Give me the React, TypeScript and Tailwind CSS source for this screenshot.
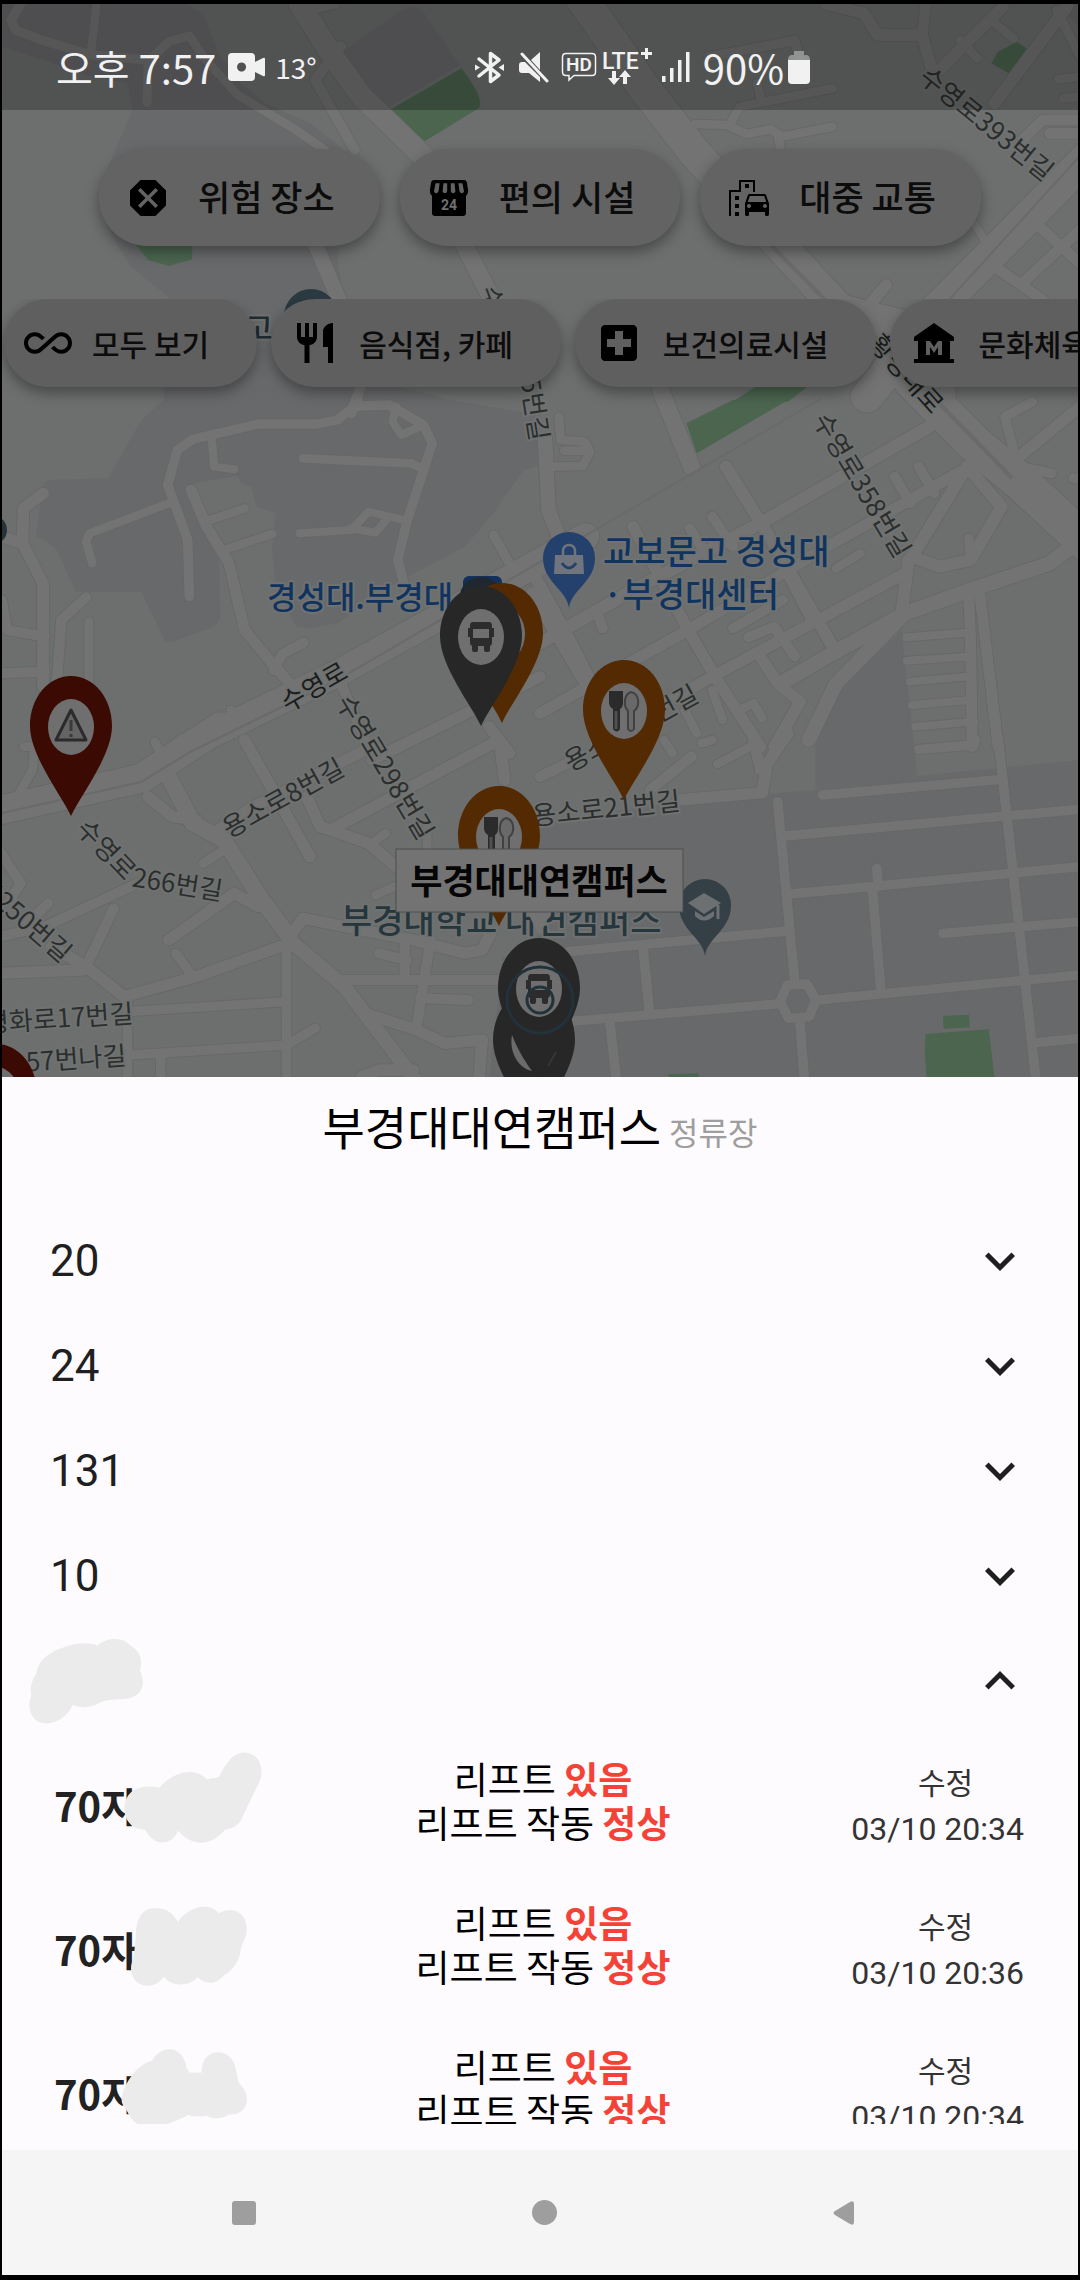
import React from "react";
import {
  MdAllInclusive,
  MdDangerous,
  MdExpandLess,
  MdExpandMore,
  MdLocalHospital,
  MdMuseum,
  MdOutlineEmojiTransportation,
  MdRestaurant,
} from "react-icons/md";

type Road = [number, string];
type Tile = { place: string; campus: string; green: string; roads: Road[] };

const LAND = "#6c6f6e";
const CAMPUS = "#68696b";
const ROAD = "#737373";
const CASING = "#656867";
const GREEN = "#4b654f";

/* Each tile uses its own grid; `place` puts it on the map canvas. */
const tiles: Tile[] = [
  {
    place: "translate(0 0) scale(.3444 .3333)",
    campus:
      "M5,12 H545 L590,45 L640,170 L700,250 L770,310 L900,370 L1010,460 L980,780 L1000,900 L1160,1160 L1310,1200 L475,1200 L500,900 L380,800 L310,680 L315,500 L385,330 L370,250 L270,230 L5,140Z M980,165 L1180,22 Q1200,12 1225,30 L1335,195 L1115,330 L1030,250Z",
    green:
      "M395,735 L430,780 L490,798 L558,778 V735Z M1115,340 L1340,205 Q1410,300 1390,325 L1215,435Z",
    roads: [
      [28, "M60,12 L32,60 L45,90 L120,120 L265,165 L430,180"],
      [24, "M280,12 L265,150"],
      [26, "M427,308 L430,185 L490,125 L550,108 L590,170 L690,285 L860,390 L970,470"],
      [64, "M870,12 L960,160 L1050,290 L1200,440 L1280,520"],
      [30, "M990,138 L915,240 L1030,450"],
      [30, "M900,28 L970,12"],
      [44, "M910,720 L985,900"],
      [52, "M1340,720 L1430,900"],
      [30, "M1020,1240 L1050,1150"],
    ],
  },
  {
    place: "translate(540 0) scale(.3444 .3333)",
    campus: "M1500,12 H1568 V80 Q1530,50 1500,12Z",
    green: "M1310,190 L1330,155 L1385,125 L1420,150 L1365,222Z M560,1205 L640,1150 L790,1150 L720,1205Z",
    roads: [
      [95, "M125,0 L300,260 L450,460 L700,740 L870,930 L1060,980 L1160,1180"],
      [34, "M830,12 L940,40 L980,105 L1110,105 L1135,200"],
      [30, "M1120,12 L1110,105"],
      [28, "M490,170 L740,122 L755,180"],
      [26, "M640,290 L630,250 M850,265 L580,320 L550,375 L450,372"],
      [26, "M550,378 L600,402 L670,388 L700,410 L850,380 M690,400 L700,460"],
      [34, "M1345,20 L1160,210"],
      [26, "M1220,120 L1270,175 M1310,60 L1375,115"],
      [36, "M1530,20 L1320,310"],
      [26, "M1568,170 L1500,30 M1568,230 L1505,238 M1568,290 L1520,295"],
      [32, "M1568,360 L1460,360 L1380,440 M1568,400 L1480,400"],
      [95, "M1620,440 L1150,930 L950,1190"],
      [24, "M1240,640 L1310,750"],
      [32, "M1440,670 L1568,790 M1320,800 L1460,900 M1568,690 L1400,850"],
      [34, "M1005,855 L960,910"],
    ],
  },
  {
    place: "translate(0 400) scale(.3444 .3333)",
    campus:
      "M475,0 L410,60 L315,235 L140,240 Q118,255 120,290 L105,410 Q150,430 165,450 L220,575 H410 L480,725 L500,725 L620,680 Q640,665 640,640 L635,480 L560,250 L690,228 L700,250 L730,262 L745,320 L800,340 L790,450 L800,560 L860,680 L900,685 L980,670 L1130,560 L1350,440 L1440,330 L1520,210 L1568,195 V45 L1310,0Z",
    green: "",
    roads: [
      [28, "M1130,15 L1030,18 L980,60 L920,72 H750 L560,118 L515,150 L487,255 L545,420 L550,590"],
      [24, "M615,115 L622,200 L680,208"],
      [25, "M490,310 L260,400 L250,425 L268,490"],
      [32, "M555,270 L600,380 L665,490 L710,690 L790,790 L850,860"],
      [26, "M610,360 L710,325 M650,450 L790,402"],
      [28, "M1130,15 L1230,75 L1255,130 L1180,370 L1155,480 L1175,560 M1040,20 V0"],
      [24, "M1150,20 L1140,65 L1165,105 L1230,75"],
      [26, "M880,175 L1195,190 L1225,205"],
      [24, "M870,400 L1020,390 L1070,335 L1170,360 M1020,385 L1090,398 L1130,350"],
      [28, "M1433,405 L1490,510"],
      [30, "M882,728 L820,762 L795,810"],
      [34, "M125,280 L68,325 L65,430 L125,550 V860 M5,410 L65,430"],
      [30, "M5,600 L20,690 L130,710 M250,592 L178,660 L165,850 M5,820 L130,815"],
      [26, "M258,665 V860"],
      [26, "M670,930 L700,980"],
      [80, "M1700,410 L980,820 L540,1040"],
      [34, "M1568,830 L1080,1080 M1420,980 L1480,1060"],
      [30, "M990,850 L1060,1020"],
      [36, "M1545,580 L1700,850"],
    ],
  },
  {
    place: "translate(540 400) scale(.3444 .3333)",
    campus: "M1050,690 L870,870 L800,1025 H1085Z",
    green: "M425,70 L560,0 H720 L455,160Z",
    roads: [
      [50, "M350,-30 L440,200"],
      [42, "M15,120 L25,330 L65,440"],
      [26, "M55,50 L60,120 L130,125 L145,155 L125,198 L30,200 M70,152 H135"],
      [36, "M540,200 L660,400 L850,740"],
      [38, "M1130,80 L640,370 L270,570 L0,730"],
      [34, "M1230,210 L850,430 L430,690 L0,940"],
      [34, "M1060,520 L790,670 L500,830 L330,930"],
      [34, "M270,380 L430,690 L520,850 L640,1040"],
      [36, "M-20,520 L70,690 L150,850"],
      [34, "M700,480 L790,660 M640,770 L690,850 L755,905 L680,1040"],
      [30, "M1030,230 L1075,310 M1100,200 L1145,280 M500,350 L560,440 M435,385 L475,450"],
      [30, "M170,650 L182,685 M560,685 L705,600 M605,712 L680,680 L740,770"],
      [26, "M860,505 L930,460 M580,930 L620,910 L645,955 M500,870 L530,960 M420,930 L455,1000"],
      [110, "M1080,-60 L1260,130 L1400,250 L1620,460"],
      [44, "M1568,420 L1480,490 L1250,570 L1060,640 L850,760 L700,850"],
      [42, "M1060,640 L860,850 L780,1020"],
      [36, "M1070,480 L1050,640 M1240,200 L1080,470 L1160,500 L1250,480 L1340,320 L1240,200"],
      [28, "M1250,480 L1245,415 M1430,5 L1350,50 L1380,170"],
      [34, "M1568,20 L1380,180"],
      [30, "M1390,200 L1485,220 M1568,235 H1550"],
      [32, "M1245,590 L1250,720 L1255,1040 M1278,590 L1330,1040"],
      [24, "M1065,712 L1240,698 M1065,782 L1240,770 M1075,845 L1240,830 M1080,915 L1250,900 M1090,980 L1260,965"],
    ],
  },
  {
    place: "translate(0 740) scale(.3444 .3333)",
    campus: "M1460,650 H1600 V1020 H1420Z",
    green: "",
    roads: [
      [86, "M640,-40 L410,115 L-20,215"],
      [26, "M70,20 H100 L95,90 L50,170 M450,5 L480,70"],
      [48, "M490,110 L560,250 L650,300 L760,480 L840,590"],
      [34, "M430,170 L500,230 L570,240"],
      [34, "M620,280 L720,210 L1060,30 M710,0 L900,350"],
      [28, "M590,370 L650,330"],
      [34, "M890,170 L930,260 L960,270 L1230,120 L1450,0 M960,270 L1070,310 L1150,380 M1450,0 L1465,120"],
      [26, "M1120,280 L1080,310 M1090,465 L1180,425 M1240,260 V320"],
      [34, "M840,590 L880,535 L1050,570 L1200,600 L1350,640 L1400,630 L1425,580"],
      [30, "M0,335 L60,430 L30,480 M140,490 L80,550 M0,590 L130,560 L400,430 M330,505 L250,680"],
      [34, "M490,600 L680,460 L750,500 M-10,700 L240,690 M150,620 L250,680 L360,770 L570,710 L840,610"],
      [28, "M510,640 L560,710"],
      [28, "M832,600 V1020 M370,815 L832,785 M370,770 V1020 M385,945 L832,915 L915,865 M467,950 V1020"],
      [42, "M840,600 L1000,740 L1220,1040"],
      [30, "M970,720 H1480 M1100,640 L1180,660 M1175,600 V720 M1250,600 L1210,860 M1220,775 L1360,780"],
      [34, "M1060,820 L1210,870 L1290,910 L1400,900 L1390,1030 M1050,1010 L1100,990 H1200"],
    ],
  },
  {
    place: "translate(540 740) scale(.3444 .3333)",
    campus: "M0,250 L400,185 L800,150 V0 H1085 L1095,108 L1568,60 V1020 H-20Z",
    green:
      "M1170,828 L1245,824 L1248,862 L1172,866Z M1120,882 L1303,868 L1320,1015 H1123 L1117,930Z M370,1003 L460,1000 V1015 H380Z",
    roads: [
      [32, "M0,110 L110,55 M320,150 L440,50 M640,90 L620,0"],
      [34, "M400,180 L645,158 L660,70 L720,-20"],
      [26, "M515,72 L620,15 M385,40 L360,0 M470,10 L500,0"],
      [28, "M690,185 L740,730 M820,165 L1340,118 M1100,28 L1260,15 L1265,0 M710,288 L1568,208"],
      [28, "M1330,-10 L1440,1020 M725,462 L960,440 L1568,380 M978,385 L982,440 M965,445 L990,755"],
      [28, "M1170,580 L1568,545 M80,635 L720,573 M300,630 L318,820 M80,845 L690,792 M810,780 L1568,705"],
      [28, "M755,850 L768,1020 M203,850 L222,1020 M1440,908 L1568,895"],
      [28, "M718,735 L775,732 L801,780 L782,830 L722,835 L697,785Z"],
    ],
  },
];

type Label = {
  t: string;
  x: number;
  y: number;
  r: number;
  s?: number;
  c?: string;
  w?: number;
  a?: "start" | "middle" | "end";
};
const labels: Label[] = [
  { t: "수영로393번길", x: 988, y: 122, r: 39 },
  { t: "수", x: 494, y: 297, r: 70 },
  { t: "5번길", x: 537, y: 409, r: 81 },
  { t: "황령대로", x: 908, y: 372, r: 48, c: "#1b1d1c" },
  { t: "수영로358번길", x: 864, y: 484, r: 59 },
  { t: "수영로", x: 313, y: 685, r: -30, c: "#1b1d1c" },
  { t: "수영로298번길", x: 387, y: 766, r: 59 },
  { t: "용소로8번길", x: 282, y: 796, r: -29 },
  { t: "수영로", x: 108, y: 848, r: 46 },
  { t: "266번길", x: 178, y: 882, r: 9 },
  { t: "용소로13번길", x: 630, y: 726, r: -29 },
  { t: "용소로21번길", x: 606, y: 806, r: -6 },
  { t: "수영로250번길", x: 69, y: 955, r: 41, a: "end" },
  { t: "평화로17번길", x: 133, y: 1011, r: -4, a: "end" },
  { t: "57번나길", x: 126, y: 1053, r: -4, a: "end" },
  { t: "고", x: 259, y: 326, r: 0, s: 30, c: "#1f2c31", w: 500 },
  { t: "경성대.부경대", x: 267, y: 595, r: 0, s: 32, c: "#11345f", a: "start", w: 500 },
  { t: "교보문고 경성대", x: 603, y: 549, r: 0, s: 34, c: "#11345f", a: "start", w: 500 },
  { t: "·부경대센터", x: 603, y: 592, r: 0, s: 34, c: "#11345f", a: "start", w: 500 },
  { t: "부경대학교 대연캠퍼스", x: 341, y: 918, r: 0, s: 34, c: "#26363d", a: "start", w: 500 },
];

type PinProps = { x: number; y: number; color: string; solid?: boolean; children?: React.ReactNode };

function Pin({ x, y, color, solid, children }: PinProps) {
  return (
    <g transform={`translate(${x} ${y})`}>
      <path
        d="M0,0 C-9,-20 -41,-60 -41,-90 C-41,-118 -23,-140 0,-140 C23,-140 41,-118 41,-90 C41,-60 9,-20 0,0Z"
        fill={color}
      />
      {!solid && <ellipse cx="0" cy="-89" rx="23" ry="28" fill="#6f6f6f" />}
      <g transform="translate(0 -89)">{children}</g>
    </g>
  );
}

const BusGlyph = () => (
  <g fill="#2c2c2c">
    <path
      fillRule="evenodd"
      d="M-8,-15 H8 Q11,-15 11,-11 V6 Q11,8 9,9 V13 Q9,15 7,15 H5 Q3,15 3,13 V9 H-3 V13 Q-3,15 -5,15 H-7 Q-9,15 -9,13 V9 Q-11,8 -11,6 V-11 Q-11,-15 -8,-15Z M-8,-8 V1 H8 V-8Z"
    />
    <path d="M-13,-9 h3 v9 h-3z M10,-9 h3 v9 h-3z" />
  </g>
);

const Cutlery = () => (
  <g>
    <path d="M-15,-20 H-1 V-8 Q-1,-4 -4,-2 V18 Q-7,23 -11,18 V-2 Q-15,-4 -15,-9Z" fill="#2b2b2b" />
    <path d="M-8,0 V18" stroke="#505050" strokeWidth="3" />
    <path d="M7,-19 C16,-17 16,-4 10,0 V18 Q7,22 4,18 V0 C-1,-5 0,-17 7,-19Z" fill="#696969" stroke="#414141" strokeWidth="2" />
  </g>
);

function MapCanvas() {
  return (
    <svg
      viewBox="2 4 1076 1073"
      preserveAspectRatio="xMidYMin slice"
      className="block h-full w-full font-['Noto_Sans_CJK_KR',sans-serif]"
      role="img"
      aria-label="지도"
    >
      <rect x="0" y="0" width="1080" height="1080" fill={LAND} />
      {tiles.map((t) => (
        <g key={t.place} transform={t.place}>
          <path d={t.campus} fill={CAMPUS} />
          {t.green && <path d={t.green} fill={GREEN} />}
        </g>
      ))}
      {[CASING, ROAD].map((color, pass) => (
        <g key={color} fill="none" stroke={color} strokeLinejoin="round" strokeLinecap="round">
          {tiles.map((t) => (
            <g key={t.place} transform={t.place}>
              {t.roads.map(([w, d]) => (
                <path key={d} d={d} strokeWidth={pass ? w : w + 5} />
              ))}
            </g>
          ))}
        </g>
      ))}
      <g fill="none" stroke="#696a6a" strokeWidth="2">
        <path d="M1078,158 L938,312 M822,398 L337,680 L190,752 L141,782 L2,813" />
        <path d="M770,244 L825,300" strokeWidth="4" />
        <path d="M938,402 L1012,478" strokeWidth="4" />
      </g>

      <circle cx="311" cy="316" r="27" fill="#2b3940" />
      <circle cx="-8" cy="530" r="15" fill="#26343a" />

      <g stroke="#6f7271" strokeWidth="4" strokeLinejoin="round" paintOrder="stroke">
        {labels.map((l) => (
          <text
            key={l.t + l.x}
            x={l.x}
            y={l.y}
            transform={`rotate(${l.r} ${l.x} ${l.y})`}
            fontSize={l.s ?? 26}
            fontWeight={l.w ?? 400}
            fill={l.c ?? "#2c2e2d"}
            textAnchor={l.a ?? "middle"}
            dominantBaseline="central"
          >
            {l.t}
          </text>
        ))}
      </g>

      <g>
        <path d="M569,608 C567,590 543,582 543,558 A26,26 0 0 1 595,558 C595,582 571,590 569,608Z" fill="#24406c" />
        <path d="M555,555 H583 L584,574 H554Z" fill="#70757d" />
        <path d="M563,555 V550 Q564,545 569,545 Q574,545 575,550 V555" fill="none" stroke="#70757d" strokeWidth="2.5" />
        <path d="M562,563 Q569,573 576,563" fill="none" stroke="#24406c" strokeWidth="3" />
      </g>
      <g>
        <path d="M705,956 C703,938 679,930 679,905 A26,26 0 0 1 731,905 C731,930 707,938 705,956Z" fill="#344046" />
        <path d="M688,903 L704,893 L721,903 L704,914Z M695,911 L704,917 L714,911 V916 Q704,925 695,916Z" fill="#6c7073" />
        <path d="M718,905 V919" stroke="#6c7073" strokeWidth="3" />
      </g>

      <rect x="463" y="576" width="39" height="30" rx="6" fill="#12315c" />
      <ellipse cx="481" cy="596" rx="21" ry="19" fill="#1f2730" />
      <Pin x={502} y={723} color="#532a02" />
      <Pin x={481} y={726} color="#272727">
        <BusGlyph />
      </Pin>
      <Pin x={71} y={816} color="#3b0a02">
        <path d="M0,-17 L15,13 H-15Z" fill="#646464" stroke="#2b2b2b" strokeWidth="3" strokeLinejoin="round" />
        <path d="M0,-7 V4 M0,7 V10" stroke="#3a3a3a" strokeWidth="3" />
      </Pin>
      <Pin x={624} y={800} color="#532a02">
        <Cutlery />
      </Pin>
      <Pin x={499} y={926} color="#532a02">
        <Cutlery />
      </Pin>
      <Pin x={-4} y={1184} color="#3b0a02" />
      <Pin x={534} y={1130} color="#272727" solid />
      <Pin x={539} y={1078} color="#272727">
        <BusGlyph />
      </Pin>
      <path d="M512,1035 C509,1050 517,1068 532,1071 C524,1060 518,1050 512,1035Z" fill="#6b6b6b" />
      <path d="M556,1052 L548,1066" stroke="#363636" strokeWidth="2" />
      <g fill="none" stroke="#22323a" strokeWidth="3">
        <circle cx="540" cy="1000" r="33" />
        <circle cx="540" cy="1000" r="13" />
      </g>

      <path d="M527,911 H552 L539,936Z" fill="#737373" />
      <rect x="396" y="849" width="287" height="63" fill="#737373" stroke="#4c4e4d" strokeWidth="1" />
      <text x="539" y="878" fontSize="35" fontWeight="700" fill="#050505" textAnchor="middle" dominantBaseline="central">
        부경대대연캠퍼스
      </text>
    </svg>
  );
}

const StoreIcon = () => (
  <svg viewBox="0 0 24 24" className="size-12 shrink-0 text-black" fill="currentColor" aria-hidden="true">
    <path
      fillRule="evenodd"
      d="M4.5,3 H19.5 Q20.6,3 20.9,4 L21.6,8.3 Q21.6,10 20.5,10.9 V19.4 Q20.5,21 18.900,21 H5.1 Q3.5,21 3.5,19.4 V10.9 Q2.4,10 2.4,8.3 L3.1,4 Q3.4,3 4.5,3Z M5.3,4.6 L4.5,8.6 Q4.8,9.8 5.8,9.6 Q6.6,9.4 6.8,8.4 L7.3,4.6Z M9.2,4.6 L8.8,8.8 Q9.2,9.7 10,9.6 Q11,9.4 11.1,8.5 V4.6Z M12.9,4.6 V8.5 Q13,9.4 14,9.6 Q14.8,9.7 15.2,8.8 L14.8,4.6Z M16.7,4.6 L17.2,8.4 Q17.4,9.4 18.2,9.6 Q19.2,9.8 19.5,8.6 L18.7,4.6Z"
    />
    <text x="12" y="18.2" fontSize="7" fontWeight="700" textAnchor="middle" fill="#707070" className="font-['Roboto',sans-serif]">
      24
    </text>
  </svg>
);

const mainFilters = [
  { label: "위험 장소", icon: <MdDangerous className="size-12 shrink-0 text-black" /> },
  { label: "편의 시설", icon: <StoreIcon /> },
  { label: "대중 교통", icon: <MdOutlineEmojiTransportation className="size-12 shrink-0 text-black" /> },
];

const subFilters = [
  { label: "모두 보기", icon: <MdAllInclusive className="size-12 shrink-0 text-black" /> },
  { label: "음식점, 카페", icon: <MdRestaurant className="size-12 shrink-0 text-black" /> },
  { label: "보건의료시설", icon: <MdLocalHospital className="size-12 shrink-0 text-black" /> },
  { label: "문화체육시설", icon: <MdMuseum className="size-12 shrink-0 text-black" /> },
];

function StatusBar() {
  return (
    <div className="flex h-[106px] items-center bg-black/25 pt-5 pr-[268px] pl-[54px] text-[#f1f1f1]">
      <span className="text-[40px] leading-10">오후 7:57</span>
      <svg viewBox="0 0 37 28" className="ml-3 h-7 w-[37px]" fill="currentColor" aria-hidden="true">
        <path
          fillRule="evenodd"
          d="M4,0 H23 Q27,0 27,4 V9 L35,5 Q37,4 37,6 V22 Q37,24 35,23 L27,19 V24 Q27,28 23,28 H4 Q0,28 0,24 V4 Q0,0 4,0Z M13.5,9.5 a4.5,4.5 0 1 0 .1,0Z"
        />
      </svg>
      <span className="ml-2.5 text-[28px] leading-10">13°</span>
      <div className="ml-auto flex items-center">
        <svg viewBox="0 0 30 33" className="h-[33px] w-[30px]" fill="currentColor" aria-hidden="true">
          <path d="M4,8 L24,24 L15.500,30.500 V2.500 L24,9 L4,25" fill="none" stroke="currentColor" strokeWidth="3.500" strokeLinejoin="round" strokeLinecap="round" />
          <path d="M0,13.500 L5,16.500 L0,19.500Z M29,13 V20 L23.500,16.500Z" />
        </svg>
        <svg viewBox="0 0 30 31" className="ml-3.5 h-[31px] w-[30px]" fill="currentColor" aria-hidden="true">
          <path d="M0,13 Q0,10 3,10 H6 L21,25 V30 L10,21 H3 Q0,21 0,18Z M12,8 L21,0 V18Z" />
          <path d="M3,2 L28,29" stroke="currentColor" strokeWidth="3" strokeLinecap="round" />
        </svg>
        <svg viewBox="0 0 36 30" className="ml-3 h-[30px] w-9" aria-hidden="true">
          <path
            d="M5,1.5 H31 Q34.5,1.5 34.5,5 V20 Q34.5,23.5 31,23.5 H13 L8,28 V23.5 H5 Q1.5,23.5 1.5,20 V5 Q1.5,1.5 5,1.5Z"
            fill="none"
            stroke="currentColor"
            strokeWidth="1.5"
          />
          <text x="18" y="19" fontSize="19" fontWeight="600" textAnchor="middle" fill="currentColor" className="font-['Roboto',sans-serif]">
            HD
          </text>
        </svg>
        <svg viewBox="0 0 52 38" className="ml-1 h-[38px] w-[52px]" fill="currentColor" aria-hidden="true">
          <text x="1" y="21" fontSize="23" fontWeight="500" className="font-['Roboto',sans-serif]">
            LTE
          </text>
          <path d="M44,0 h3 v4 h4 v3 h-4 v4 h-3 v-4 h-4 v-3 h4z M11,23 h4 v7 h4 l-6,7 -6,-7 h4z M22,36 h4 v-7 h4 l-6,-7 -6,7 h4z" />
        </svg>
        <svg viewBox="0 0 30 30" className="ml-2 size-[30px]" fill="currentColor" aria-hidden="true">
          <path d="M1,24 h3.5 v6 h-3.5z M9,16 h3.5 v14 h-3.5z M17,8 h3.5 v22 h-3.5z M25,0 h3.5 v30 h-3.5z" />
        </svg>
        <span className="ml-3 text-[40px] leading-10">90%</span>
        <svg viewBox="0 0 22 33" className="ml-1 h-[33px] w-[22px]" fill="currentColor" aria-hidden="true">
          <path d="M6,0 H16 V4 H19 Q22,5 22,9 H0 Q0,5 3,4 H6Z" opacity=".4" />
          <path d="M0,9 H22 V29 Q22,33 18,33 H4 Q0,33 0,29Z" />
        </svg>
      </div>
    </div>
  );
}

type BusEntry = { hour: string; mask: React.ReactNode };
const buses: BusEntry[] = [
  {
    hour: "20:34",
    mask: (
      <svg viewBox="355 365 410 260" preserveAspectRatio="none" className="absolute top-[18px] left-[120px] h-[93px] w-[141px]" fill="#ebebeb" aria-hidden="true">
        <path d="M362,520 C365,480 400,455 465,467 C490,435 560,400 602,445 C615,440 625,442 636,438 C655,405 675,370 710,369 C750,369 772,410 755,450 L705,550 C695,575 675,582 655,585 C620,625 565,640 518,588 C500,630 450,635 422,585 C385,585 360,560 362,520Z" />
      </svg>
    ),
  },
  {
    hour: "20:36",
    mask: (
      <svg viewBox="375 798 345 227" preserveAspectRatio="none" className="absolute top-[29px] left-[127px] h-[81px] w-[119px]" fill="#ebebeb" aria-hidden="true">
        <path d="M395,880 C395,840 410,803 450,804 C485,803 505,820 517,843 C535,810 600,780 635,818 C680,795 720,820 716,870 C712,895 700,905 698,925 C695,955 670,985 650,992 C630,1018 595,1020 574,998 C550,1025 500,1025 475,996 C450,1035 385,1030 381,975 C380,960 388,950 390,930Z" />
      </svg>
    ),
  },
  {
    hour: "20:34",
    mask: (
      <svg viewBox="350 1195 368 223" preserveAspectRatio="none" className="absolute top-[27px] left-[119px] h-[80px] w-[127px]" fill="#ebebeb" aria-hidden="true">
        <path d="M352,1335 C355,1310 385,1245 440,1230 C465,1185 530,1185 540,1250 L548,1263 L584,1263 C580,1195 670,1185 683,1255 C688,1280 690,1290 695,1296 C735,1335 710,1385 665,1380 C640,1395 610,1393 598,1383 C580,1388 560,1387 545,1382 C510,1400 440,1430 400,1408 C375,1395 370,1370 360,1360 C353,1352 351,1345 352,1335Z" />
      </svg>
    ),
  },
];

export default function App() {
  return (
    <div className="flex h-screen flex-col overflow-hidden bg-black px-0.5 pt-1 pb-[5px] font-['Noto_Sans_CJK_KR',sans-serif]">
      <section className="relative h-[1073px] shrink-0 overflow-hidden">
        <MapCanvas />
        <div className="absolute inset-x-0 top-0">
          <StatusBar />
          <div className="mt-[39px] flex justify-center gap-5">
            {mainFilters.map((f) => (
              <button
                key={f.label}
                type="button"
                className="flex h-[97px] items-center gap-[26px] rounded-full bg-[#636363] pr-[45px] pl-[25px] text-[35px] leading-none font-medium whitespace-nowrap text-[#0c0c0c] shadow-[0_6px_14px_rgba(0,0,0,0.35)]"
              >
                {f.icon}
                <span className="pb-1">{f.label}</span>
              </button>
            ))}
          </div>
          <div className="mt-[53px] flex gap-[14px] overflow-hidden pb-6 pl-0.5">
            {subFilters.map((f) => (
              <button
                key={f.label}
                type="button"
                className="flex h-[88px] shrink-0 items-center gap-5 rounded-full bg-[#5f5f5f] pr-12 pl-5 text-[30px] leading-none font-medium whitespace-nowrap text-[#0c0c0c] shadow-[0_6px_14px_rgba(0,0,0,0.35)]"
              >
                {f.icon}
                <span>{f.label}</span>
              </button>
            ))}
          </div>
        </div>
      </section>

      <section className="flex min-h-0 flex-1 flex-col bg-[#fefbff] pb-[26px]">
        <header className="flex h-[131px] shrink-0 items-baseline justify-center gap-2 pt-4">
          <h1 className="text-[46px] leading-[64px] text-black">부경대대연캠퍼스</h1>
          <span className="text-[32px] text-[#9e9e9e]">정류장</span>
        </header>
        <div className="min-h-0 flex-1 overflow-hidden">
          {["20", "24", "131", "10"].map((n) => (
            <button
              key={n}
              type="button"
              aria-expanded="false"
              className="flex h-[105px] w-full items-center justify-between pr-12 pl-12 text-[#1f1f1f]"
            >
              <span className="font-['Roboto',sans-serif] text-[44px] leading-none">{n}</span>
              <MdExpandMore className="size-[60px]" />
            </button>
          ))}
          <button
            type="button"
            aria-expanded="true"
            aria-label="노선 접기"
            className="flex h-[105px] w-full items-center justify-between pr-12 pl-[26px] text-[#1f1f1f]"
          >
            <svg viewBox="80 55 340 240" preserveAspectRatio="none" className="h-[86px] w-[117px]" fill="#ebebeb" aria-hidden="true">
              <path d="M104,155 C108,125 125,108 160,90 C200,72 245,62 282,76 C310,50 360,52 380,78 C405,90 415,120 405,146 C425,185 410,215 370,224 C345,229 320,222 288,236 C265,250 235,252 210,242 C195,275 160,295 130,293 C90,292 75,250 90,217 C84,195 92,170 104,155Z" />
            </svg>
            <MdExpandLess className="size-[60px]" />
          </button>
          <ul>
            {buses.map((b, i) => (
              <li key={i} className="relative grid h-36 grid-cols-[1fr_auto_1fr] items-center pr-[54px] pl-[52px]">
                <b className="text-[40px] leading-none text-[#222]">70자</b>
                {b.mask}
                <p className="pb-2.5 pl-2 text-center text-[37px] leading-[44px] text-black">
                  <span className="block">
                    리프트 <b className="text-[#f44336]">있음</b>
                  </span>
                  <span className="block">
                    리프트 작동 <b className="text-[#f44336]">정상</b>
                  </span>
                </p>
                <p className="justify-self-end text-center text-[30px] leading-[48px] text-[#333]">
                  <span className="block pl-4">수정</span>
                  <span className="block font-['Roboto',sans-serif] text-[32px]">03/10 {b.hour}</span>
                </p>
              </li>
            ))}
          </ul>
        </div>
      </section>

      <nav className="flex h-[125px] shrink-0 items-center justify-center bg-[#f5f5f5] pl-2 text-[#9e9e9e]">
        <button type="button" aria-label="최근 앱" className="flex h-full w-[300px] items-center justify-center">
          <span className="size-6 rounded-[3px] bg-current" />
        </button>
        <button type="button" aria-label="홈" className="flex h-full w-[300px] items-center justify-center">
          <span className="size-[25px] rounded-full bg-current" />
        </button>
        <button type="button" aria-label="뒤로" className="flex h-full w-[300px] items-center justify-center">
          <svg viewBox="0 0 22 24" className="h-6 w-[22px]" fill="currentColor" aria-hidden="true">
            <path d="M2,10 L17,1 Q21,-1 21,3 V21 Q21,25 17,23 L2,14 Q-1,12 2,10Z" />
          </svg>
        </button>
      </nav>
    </div>
  );
}
